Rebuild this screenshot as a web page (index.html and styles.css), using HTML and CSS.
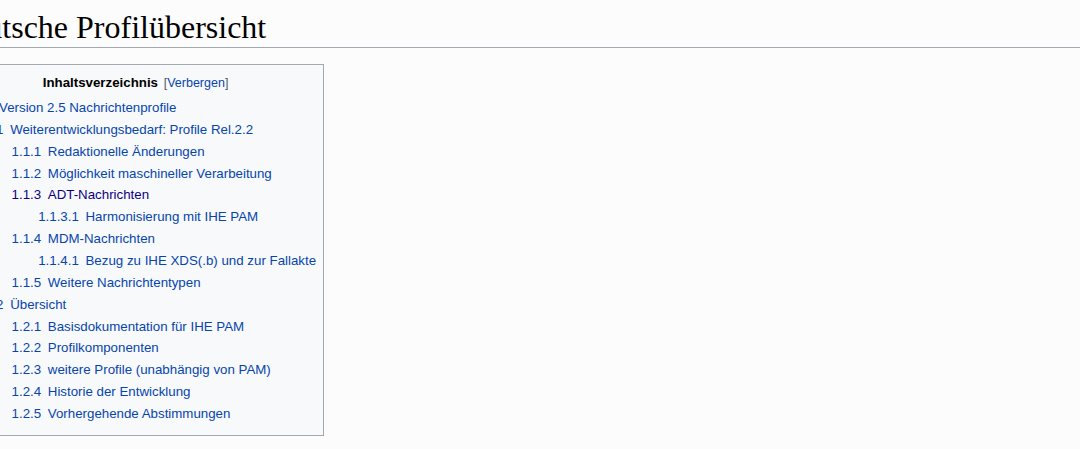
FILE: index.html
```html
<!DOCTYPE html>
<html lang="de">
<head>
    <meta charset="UTF-8">
    <title>Deutsche Profilübersicht</title>
    <link rel="stylesheet" href="styles.css">
</head>
<body>
<div class="content">
    <h1 class="firstHeading">Deutsche Profilübersicht</h1>

    <div class="toc" id="toc">
        <div class="toctitle">
            <h2>Inhaltsverzeichnis</h2>
            <span class="toctoggle">[<a href="#">Verbergen</a>]</span>
        </div>
        <ul>
            <li><a href="#"><span class="tocnumber">1</span><span class="toctext">Version 2.5 Nachrichtenprofile</span></a>
                <ul class="flat">
                    <li><a href="#"><span class="tocnumber">1.1</span><span class="toctext">Weiterentwicklungsbedarf: Profile Rel.2.2</span></a>
                        <ul>
                            <li><a href="#"><span class="tocnumber">1.1.1</span><span class="toctext">Redaktionelle Änderungen</span></a></li>
                            <li><a href="#"><span class="tocnumber">1.1.2</span><span class="toctext">Möglichkeit maschineller Verarbeitung</span></a></li>
                            <li><a href="#" class="visited"><span class="tocnumber">1.1.3</span><span class="toctext">ADT-Nachrichten</span></a>
                                <ul>
                                    <li><a href="#"><span class="tocnumber">1.1.3.1</span><span class="toctext">Harmonisierung mit IHE PAM</span></a></li>
                                </ul>
                            </li>
                            <li><a href="#"><span class="tocnumber">1.1.4</span><span class="toctext">MDM-Nachrichten</span></a>
                                <ul>
                                    <li><a href="#"><span class="tocnumber">1.1.4.1</span><span class="toctext">Bezug zu IHE XDS(.b) und zur Fallakte</span></a></li>
                                </ul>
                            </li>
                            <li><a href="#"><span class="tocnumber">1.1.5</span><span class="toctext">Weitere Nachrichtentypen</span></a></li>
                        </ul>
                    </li>
                    <li><a href="#"><span class="tocnumber">1.2</span><span class="toctext">Übersicht</span></a>
                        <ul>
                            <li><a href="#"><span class="tocnumber">1.2.1</span><span class="toctext">Basisdokumentation für IHE PAM</span></a></li>
                            <li><a href="#"><span class="tocnumber">1.2.2</span><span class="toctext">Profilkomponenten</span></a></li>
                            <li><a href="#"><span class="tocnumber">1.2.3</span><span class="toctext">weitere Profile (unabhängig von PAM)</span></a></li>
                            <li><a href="#"><span class="tocnumber">1.2.4</span><span class="toctext">Historie der Entwicklung</span></a></li>
                            <li><a href="#"><span class="tocnumber">1.2.5</span><span class="toctext">Vorhergehende Abstimmungen</span></a></li>
                        </ul>
                    </li>
                </ul>
            </li>
        </ul>
    </div>
</div>
</body>
</html>
```

FILE: styles.css
```css
@charset "UTF-8";
/* reset */
body,h1,h2,ul,li{margin:0;padding:0}
ul{list-style:none}
a{text-decoration:none;color:#0645ad}

body{
    background:#fcfcfc;
    color:#202122;
    font-family:"Liberation Sans", Arial, sans-serif;
    font-size:14px;
    overflow:hidden;
}

/* page is scrolled a little to the right */
.content{
    margin-left:-53px;
    padding-top:7px;
}

.firstHeading{
    font-family:"Liberation Serif", "Times New Roman", serif;
    font-weight:normal;
    font-size:32px;
    line-height:40px;
    color:#000;
    border-bottom:1px solid #a2a9b1;
    margin-bottom:16px;
    padding-left:2px;
}

.toc{
    display:inline-block;
    background:#f8f9fa;
    border:1px solid #a2a9b1;
    padding:7px;
    font-size:13.3px;
}
.toctitle{
    text-align:center;
    line-height:21px;
}
.toctitle h2{
    display:inline;
    font-size:13.3px;
    font-weight:bold;
    color:#000;
}
.toctoggle{
    font-size:12.5px;
    color:#54595d;
    margin-left:2px;
}

.toc > ul{
    margin:3px 0;
    padding-left:30px;
}
.toc ul ul{
    margin-left:2em;
}
.toc ul.flat{
    margin-left:0;
}
.toc li{
    line-height:21.86px;
    white-space:nowrap;
}
.tocnumber{
    padding-right:0.5em;
}
.toc a.visited{
    color:#0b0080;
}
```
